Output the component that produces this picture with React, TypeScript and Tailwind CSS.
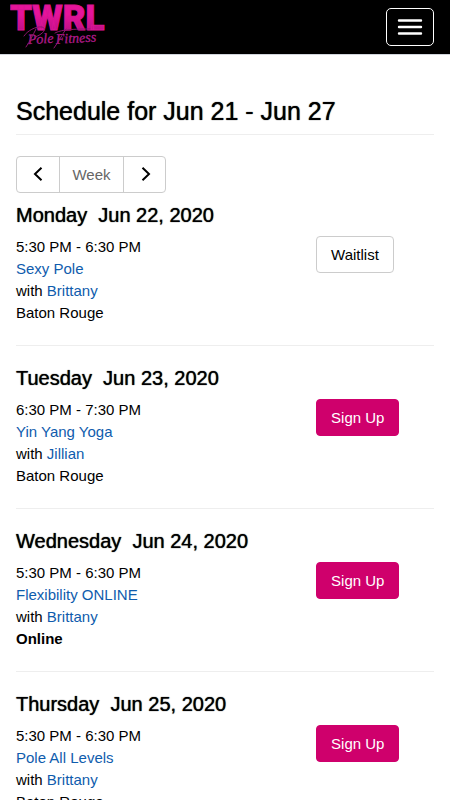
import React from 'react';

interface ClassEntry {
    day: string;
    date: string;
    time: string;
    name: string;
    teacher: string;
    location: string;
    online?: boolean;
    waitlist?: boolean;
}

const CLASSES: ClassEntry[] = [
    { day: 'Monday', date: 'Jun 22, 2020', time: '5:30 PM - 6:30 PM', name: 'Sexy Pole', teacher: 'Brittany', location: 'Baton Rouge', waitlist: true },
    { day: 'Tuesday', date: 'Jun 23, 2020', time: '6:30 PM - 7:30 PM', name: 'Yin Yang Yoga', teacher: 'Jillian', location: 'Baton Rouge' },
    { day: 'Wednesday', date: 'Jun 24, 2020', time: '5:30 PM - 6:30 PM', name: 'Flexibility ONLINE', teacher: 'Brittany', location: 'Online', online: true },
    { day: 'Thursday', date: 'Jun 25, 2020', time: '5:30 PM - 6:30 PM', name: 'Pole All Levels', teacher: 'Brittany', location: 'Baton Rouge' },
];

const Logo: React.FC = () => (
    <svg width="110" height="52" viewBox="0 0 110 52" role="img" aria-label="TWRL Pole Fitness">
        <defs>
            <linearGradient id="logo-pink" x1="0" y1="0" x2="0" y2="1">
                <stop offset="0.4" stopColor="#e6149b" />
                <stop offset="1" stopColor="#a80f7c" />
            </linearGradient>
        </defs>
        <text x="0" y="30" fill="url(#logo-pink)" stroke="#dc1496" fontFamily="Roboto, sans-serif" fontWeight="900" fontSize="35">TWRL</text>
        <g transform="rotate(-3 20 44)" fill="#b01a8a" stroke="#b01a8a" strokeWidth="0.3" fontFamily="'Liberation Serif', serif" fontStyle="italic" fontSize="14">
            <text x="18" y="44">Pole</text>
            <text x="46" y="45">Fitness</text>
        </g>
        {/* pen strokes of the script line: P and F loops, then the long F crossbar */}
        <g fill="none" stroke="#8f1570" strokeLinecap="round">
            <path d="M14 36c3-5 12-10 18-9 5 1 2 7-7 10" />
            <path d="M26 29c-3 6-6 12-10 18" />
            <path d="M45 33c6-3 14-4 35-4" />
            <path d="M56 29c-4 6-7 12-12 19" />
        </g>
    </svg>
);

const Header: React.FC = () => (
    <header className="flex h-[55px] items-start justify-between border-b border-gray-300 bg-black pr-4 pl-[10px]">
        <a href="#home">
            <Logo />
        </a>
        <button aria-label="Menu" className="mt-2 flex h-[38px] w-12 items-center justify-center rounded-[5px] border border-white">
            <svg width="26" height="18" viewBox="0 0 26 18" fill="none" stroke="#fff" strokeWidth="2.4" strokeLinecap="round">
                <path d="M2 2.5h22M2 9h22M2 15.5h22" />
            </svg>
        </button>
    </header>
);

const WeekNav: React.FC = () => (
    <div className="mt-[21px] flex h-[37px] w-fit divide-x divide-[#ccc] rounded border border-[#ccc]">
        <button aria-label="Previous week" className="flex w-[43px] items-center justify-center">
            <svg width="14" height="14" viewBox="0 0 14 14" fill="none" stroke="#000" strokeWidth="2" className="mb-[2px]">
                <path d="M10.5 0.8L4 7l6.5 6.2" />
            </svg>
        </button>
        <button disabled className="w-16 text-center text-[#666]">Week</button>
        <button aria-label="Next week" className="flex w-[41px] items-center justify-center">
            <svg width="14" height="14" viewBox="0 0 14 14" fill="none" stroke="#000" strokeWidth="2" className="mb-[2px]">
                <path d="M4.5 0.8L11 7l-6.5 6.2" />
            </svg>
        </button>
    </div>
);

const ClassRow: React.FC<{ entry: ClassEntry }> = ({ entry }) => (
    <section className="mb-[21px] border-b border-[#eee] pb-[21px]">
        <h3 className="mb-[10px] text-[20px] leading-[22px] [text-shadow:0_0_1px_#000]">
            {entry.day}&nbsp; {entry.date}
        </h3>
        <div className="grid grid-cols-[28fr_11fr] items-start">
            <div>
                <p>{entry.time}</p>
                <p><a href="#class" className="text-[#0f5cad]">{entry.name}</a></p>
                <p>with <a href="#teacher" className="text-[#0f5cad]">{entry.teacher}</a></p>
                <p className={entry.online ? 'font-bold' : ''}>{entry.location}</p>
            </div>
            <button
                className={`h-[37px] w-fit rounded border px-[14px] ${entry.waitlist ? 'border-[#ccc] bg-white' : 'border-[#cf006c] bg-[#cf006c] text-white'}`}
            >
                {entry.waitlist ? 'Waitlist' : 'Sign Up'}
            </button>
        </div>
    </section>
);

export default function App() {
    return (
        <div className="h-screen overflow-y-auto bg-white font-['Liberation_Sans',Arial,sans-serif] text-[15px] leading-[22px] text-black [scrollbar-width:none]">
            <Header />
            <main className="px-4 pt-[42px]">
                <h1 className="border-b border-[#eee] pb-[9px] text-[25px] leading-[28px] [text-shadow:0_0_1px_#000]">
                    Schedule for Jun 21 - Jun 27
                </h1>
                <WeekNav />
                <div className="mt-[11px]">
                    {CLASSES.map(entry => <ClassRow key={entry.date} entry={entry} />)}
                </div>
            </main>
        </div>
    );
}
